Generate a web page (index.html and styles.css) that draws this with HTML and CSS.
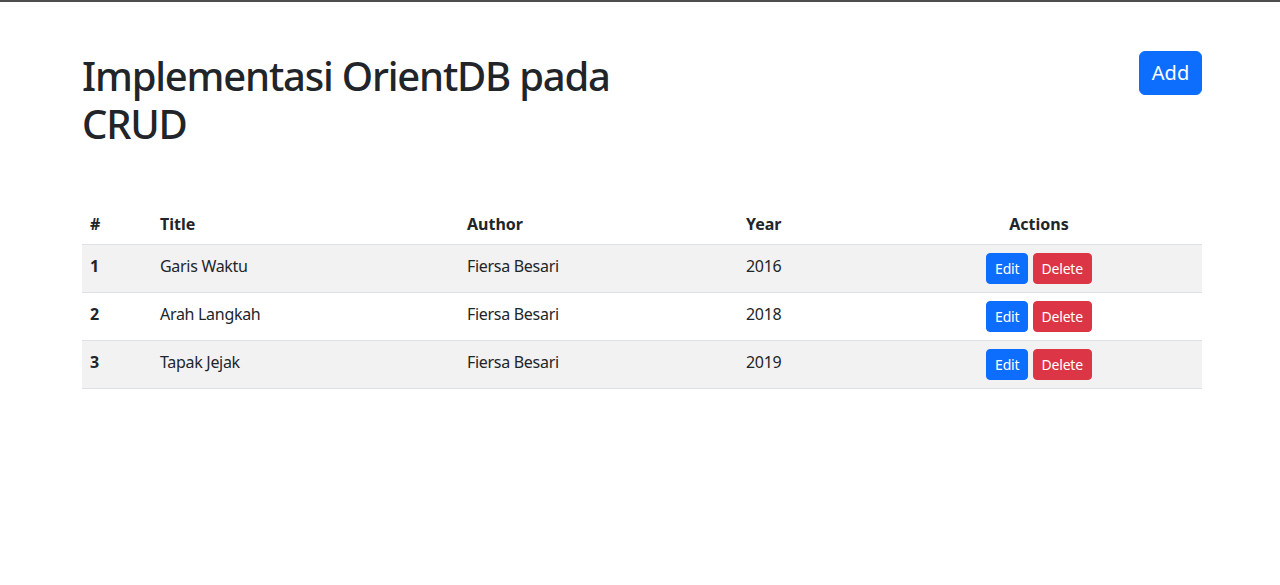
FILE: index.html
```html
<!DOCTYPE html>
<html lang="id">
<head>
<meta charset="utf-8">
<title>Implementasi OrientDB pada CRUD</title>
<link rel="stylesheet" href="styles.css">
</head>
<body>
<div class="container">
  <header class="page-head">
    <h1 class="title">Implementasi OrientDB pada CRUD</h1>
    <button class="btn btn-primary btn-lg">Add</button>
  </header>
  <table class="table">
    <thead>
      <tr>
        <th class="c-num">#</th>
        <th class="c-title">Title</th>
        <th class="c-author">Author</th>
        <th class="c-year">Year</th>
        <th class="c-actions">Actions</th>
      </tr>
    </thead>
    <tbody>
      <tr class="striped">
        <th>1</th>
        <td>Garis Waktu</td>
        <td>Fiersa Besari</td>
        <td>2016</td>
        <td class="c-actions"><button class="btn btn-primary btn-sm">Edit</button> <button class="btn btn-danger btn-sm">Delete</button></td>
      </tr>
      <tr>
        <th>2</th>
        <td>Arah Langkah</td>
        <td>Fiersa Besari</td>
        <td>2018</td>
        <td class="c-actions"><button class="btn btn-primary btn-sm">Edit</button> <button class="btn btn-danger btn-sm">Delete</button></td>
      </tr>
      <tr class="striped">
        <th>3</th>
        <td>Tapak Jejak</td>
        <td>Fiersa Besari</td>
        <td>2019</td>
        <td class="c-actions"><button class="btn btn-primary btn-sm">Edit</button> <button class="btn btn-danger btn-sm">Delete</button></td>
      </tr>
    </tbody>
  </table>
</div>
</body>
</html>
```
FILE: styles.css
```css
* { box-sizing: border-box; }
html, body { margin: 0; padding: 0; }
body {
  font-family: "Noto Sans", "Open Sans", sans-serif;
  font-size: 16px;
  line-height: 1.5;
  color: #212529;
  background: #fff;
  border-top: 2px solid #4d4d4d;
  min-height: 585px;
}
.container {
  width: 1120px;
  margin-left: 82px;
}
.page-head {
  display: flex;
  justify-content: space-between;
  align-items: flex-start;
  padding-top: 50px;
}
.title {
  margin: 0;
  width: 560px;
  font-size: 40px;
  font-weight: 500;
  line-height: 1.2;
  letter-spacing: -1.2px;
}
.btn {
  font-family: inherit;
  border: 1px solid transparent;
  color: #fff;
  cursor: pointer;
  display: inline-block;
  vertical-align: middle;
}
.btn-primary { background: #0d6efd; border-color: #0d6efd; }
.btn-danger { background: #dc3545; border-color: #dc3545; }
.btn-lg {
  margin-top: -1px;
  width: 63px;
  height: 44px;
  font-size: 20px;
  line-height: 1;
  padding: 0;
  border-radius: 6px;
}
.btn-sm {
  font-size: 14px;
  line-height: 21px;
  padding: 4px 8px;
  border-radius: 4px;
  height: 31px;
  letter-spacing: -0.2px;
}
.table {
  margin-top: 56px;
  width: 1120px;
  border-collapse: collapse;
  table-layout: fixed;
}
.table th, .table td {
  padding: 8px;
  text-align: left;
  border-bottom: 1px solid #dee2e6;
  vertical-align: middle;
}
.table tbody th, .table tbody td {
  padding: 5px 8px 11px;
}
.table tbody td { font-weight: 400; letter-spacing: -0.3px; }
.table th { font-weight: 700; }
.table tbody td.c-actions { padding: 8px; letter-spacing: 0; }
.striped { background: #f2f2f2; }
.c-num { width: 70px; }
.c-title { width: 307px; }
.c-author { width: 279px; }
.c-year { width: 138px; }
.table .c-actions { text-align: center; }
```
